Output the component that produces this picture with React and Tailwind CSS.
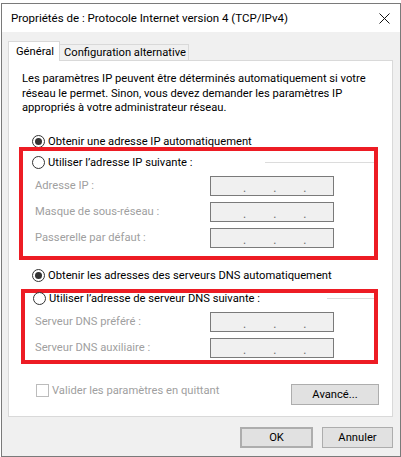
import React from "react";

const Radio = ({ checked }) => (
  <div className="w-[13px] h-[13px] rounded-full border border-[#333333] bg-white flex items-center justify-center shrink-0">
    {checked && <div className="w-[7px] h-[7px] rounded-full bg-[#333333]" />}
  </div>
);

const IpBox = () => (
  <div className="w-[124px] h-[20px] border border-[#7a7a7a] bg-[#f0f0f0] flex items-end pb-[3px] text-[#6d6d6d] leading-[8px] text-[12px]">
    <div className="w-[32px]" />
    <span>.</span>
    <div className="w-[27px]" />
    <span>.</span>
    <div className="w-[27px]" />
    <span>.</span>
  </div>
);

const Field = ({ label }) => (
  <div className="flex items-center h-[20px]">
    <div className="w-[175px] text-[#a0a0a0]">{label}</div>
    <IpBox />
  </div>
);

const RadioRow = ({ checked, label, line }) => (
  <div className="flex items-center h-[10px]">
    <Radio checked={checked} />
    <span className="ml-[3px] whitespace-nowrap">{label}</span>
    {line && <div className={`ml-auto h-px bg-[#dcdcdc] ${line}`} />}
  </div>
);

const Button = ({ children, className = "" }) => (
  <div className={`h-[21px] flex items-center justify-center bg-[#e1e1e1] border border-[#adadad] ${className}`}>
    {children}
  </div>
);

export default function App() {
  return (
    <div className="w-[401px] h-[457px] overflow-hidden bg-white text-[11.2px] text-black font-['Roboto',sans-serif] leading-[15px]">
      <div className="h-[3px] overflow-hidden pl-[38px]">
        <div className="-mt-[12px] text-[#333] whitespace-nowrap">service en d’accel</div>
      </div>

      <div className="ml-[1px] w-[400px] h-[454px] border border-[#7a7a7a] flex flex-col">
        <div className="h-[28px] bg-white flex items-center justify-between pl-[9px] pr-[9px] text-[11.5px]">
          <span>Propriétés de : Protocole Internet version 4 (TCP/IPv4)</span>
          <svg width="11" height="11" viewBox="0 0 11 11" className="mr-[1px]">
            <path d="M0.5 0.5 L10.5 10.5 M10.5 0.5 L0.5 10.5" stroke="#111" strokeWidth="1" fill="none" />
          </svg>
        </div>

        <div className="flex-1 bg-[#f0f0f0] px-[6px] pt-[9px] flex flex-col">
          <div className="flex items-end h-[19px]">
            <div className="relative z-10 h-[20px] -mb-px bg-white border border-b-0 border-[#d9d9d9] w-[52px] pl-[7px] pt-[2px]">
              Général
            </div>
            <div className="h-[16px] bg-[#f0f0f0] border border-l-0 border-b-0 border-[#d9d9d9] w-[129px] pl-[4px] leading-[16px] whitespace-nowrap">
              Configuration alternative
            </div>
          </div>

          <div className="w-[385px] h-[357px] bg-white border border-[#d9d9d9] flex flex-col">
            <div className="pl-[13px] pt-[11px] leading-[14.5px] whitespace-nowrap">
              Les paramètres IP peuvent être déterminés automatiquement si votre
              <br />
              réseau le permet. Sinon, vous devez demander les paramètres IP
              <br />
              appropriés à votre administrateur réseau.
            </div>

            <div className="mt-[21px] pl-[23px]">
              <RadioRow checked label="Obtenir une adresse IP automatiquement" />
            </div>

            <div className="ml-[10px] w-[359px] h-[113px] border-4 border-[#ed1c24] pt-[7px]">
              <div className="pl-[9px]">
                <RadioRow label="Utiliser l’adresse IP suivante :" line="w-[109px]" />
              </div>
              <div className="mt-[8px] pl-[12px] flex flex-col gap-[6px]">
                <Field label="Adresse IP :" />
                <Field label="Masque de sous-réseau :" />
                <Field label="Passerelle par défaut :" />
              </div>
            </div>

            <div className="mt-[11px] pl-[23px]">
              <RadioRow checked label="Obtenir les adresses des serveurs DNS automatiquement" />
            </div>

            <div className="mt-[8px] ml-[12px] w-[357px] h-[75px] border-4 border-[#ed1c24] pt-[1px]">
              <div className="pl-[8px]">
                <RadioRow label="Utiliser l’adresse de serveur DNS suivante :" line="w-[47px]" />
              </div>
              <div className="mt-[8px] pl-[10px] flex flex-col gap-[6px]">
                <Field label="Serveur DNS préféré :" />
                <Field label="Serveur DNS auxiliaire :" />
              </div>
            </div>

            <div className="mt-[20px] pl-[27px] pr-[13px] flex items-start justify-between">
              <div className="flex items-center h-[13px]">
                <div className="w-[13px] h-[13px] border border-[#bcbcbc] bg-white" />
                <span className="ml-[3px] text-[#a0a0a0]">Valider les paramètres en quittant</span>
              </div>
              <Button className="w-[88px] h-[20px]">Avancé...</Button>
            </div>
          </div>

          <div className="mt-[10px] pr-[1px] flex justify-end gap-[9px]">
            <Button className="w-[73px] border-2 border-[#0078d7]">OK</Button>
            <Button className="w-[71px]">Annuler</Button>
          </div>
        </div>
      </div>
    </div>
  );
}
